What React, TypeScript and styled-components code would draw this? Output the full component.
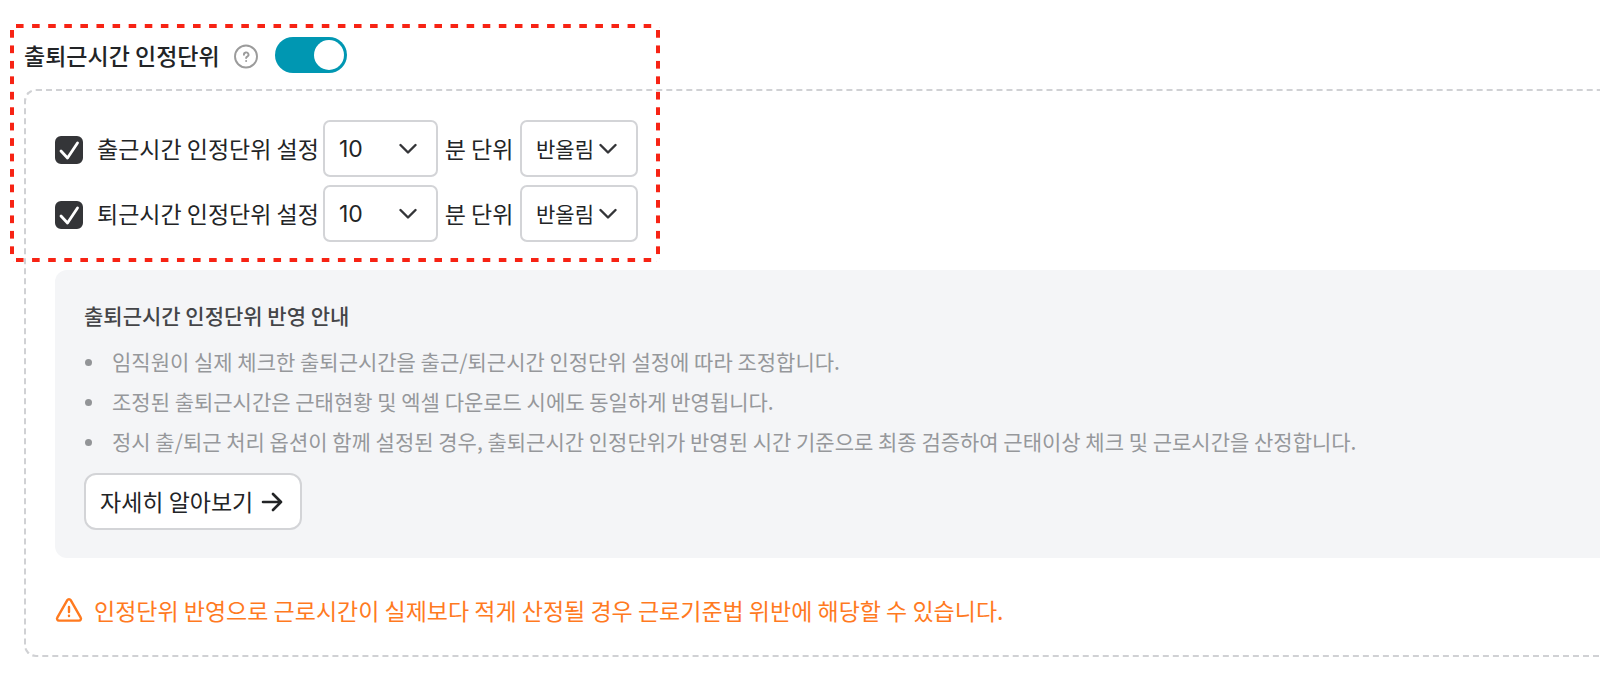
import React, { useId, useState } from "react";
import styled, { createGlobalStyle } from "styled-components";

const GlobalStyle = createGlobalStyle`
  *, *::before, *::after { box-sizing: border-box; }
  body {
    margin: 0;
    background: #fff;
    color: #222426;
    font-family: "Noto Sans CJK KR", "Noto Sans", sans-serif;
    font-size: 23px;
    line-height: 36px;
    overflow-x: hidden;
  }
  button, input, select { font: inherit; color: inherit; margin: 0; }
`;

const Page = styled.main`
  position: relative;
  padding: 37px 0 27px 24px;
`;

const dash = (angle: string) =>
  `linear-gradient(${angle}, #f72314 50%, transparent 50%)`;

const Highlight = styled.div`
  position: absolute;
  top: 24px;
  left: 10px;
  width: 650px;
  height: 238px;
  padding: 6px 0 0 6px;
  border-radius: 6px;
  pointer-events: none;
  background-image: ${dash("90deg")}, ${dash("90deg")}, ${dash("180deg")}, ${dash("180deg")};
  background-origin: content-box;
  background-clip: border-box;
  background-size: 16px 4px, 16px 4px, 4px 15px, 4px 15px;
  background-position: 0 -6px, 0 100%, -6px 0, 100% 0;
  background-repeat: round no-repeat, round no-repeat, no-repeat round, no-repeat round;
`;

const Header = styled.header`
  display: flex;
  align-items: center;
  height: 36px;
  margin-bottom: 16px;
`;

const Title = styled.h1`
  margin: 0;
  font-size: 23px;
  font-weight: 500;
  line-height: 36px;
`;

const HelpButton = styled.button`
  display: flex;
  margin: 2px 16px 0 13px;
  padding: 0;
  border: 0;
  background: none;
  color: #9b9b9b;
`;

const Switch = styled.input`
  appearance: none;
  display: flex;
  justify-content: flex-start;
  width: 72px;
  height: 36px;
  padding: 3px;
  border-radius: 18px;
  background: #c4c7ca;
  &::before {
    content: "";
    width: 30px;
    height: 30px;
    border-radius: 50%;
    background: #fff;
  }
  &:checked {
    justify-content: flex-end;
    background: #0097b2;
  }
`;

const Panel = styled.section`
  padding: 29px 0 29px 29px;
  border: 2px dashed #d0d1d4;
  border-right: 0;
  border-radius: 12px 0 0 12px;
`;

const Rows = styled.div`
  display: flex;
  flex-direction: column;
  gap: 8px;
  margin-bottom: 28px;
`;

const Row = styled.div`
  display: flex;
  align-items: center;
  height: 57px;
`;

const CheckLabel = styled.label`
  display: flex;
  align-items: center;
  gap: 14px;
  width: 268px;
  white-space: nowrap;
`;

const LabelText = styled.span`
  padding-bottom: 2px;
`;

const Stack = styled.span`
  display: grid;
  align-items: center;
  flex: none;
  & > * { grid-area: 1 / 1; }
  & > svg { pointer-events: none; }
`;

const CheckStack = styled(Stack)`
  margin-top: 2px;
`;

const CheckBox = styled.input`
  appearance: none;
  width: 28px;
  height: 28px;
  border: 2px solid #343538;
  border-radius: 6px;
  &:checked { background: #343538; }
`;

const SelectStack = styled(Stack)`
  & > svg {
    justify-self: end;
    margin-right: 21px;
  }
`;

const Select = styled.select<{ $width: number; $numeric?: boolean }>`
  appearance: none;
  width: ${(p) => p.$width}px;
  height: 57px;
  padding: ${(p) => (p.$numeric ? "0 14px" : "0 14px 2px")};
  border: 2px solid #d3d4d7;
  border-radius: 7px;
  background: #fff;
  font-family: ${(p) => (p.$numeric ? "Inter, " : "")}"Noto Sans CJK KR", sans-serif;
  font-size: ${(p) => (p.$numeric ? 23 : 21)}px;
`;

const Unit = styled.span`
  width: 82px;
  padding-bottom: 2px;
  text-align: center;
`;

const Info = styled.section`
  padding: 29px 29px 28px;
  border-radius: 12px 0 0 12px;
  background: #f4f5f7;
  font-size: 21px;
`;

const InfoTitle = styled.h2`
  margin: 0 0 10px;
  color: #444548;
  font-size: 21px;
  font-weight: 500;
  line-height: 32px;
`;

const InfoList = styled.ul`
  margin: 0 0 12px;
  padding: 0;
  list-style: none;
  color: #96989b;
`;

const InfoItem = styled.li`
  display: flex;
  align-items: center;
  gap: 20px;
  padding-left: 1px;
  line-height: 40px;
  &::before {
    content: "";
    flex: none;
    width: 7px;
    height: 7px;
    margin-top: 2px;
    border-radius: 50%;
    background: #929497;
  }
`;

const MoreButton = styled.button`
  display: flex;
  align-items: center;
  gap: 8px;
  width: 218px;
  height: 57px;
  padding: 0 14px;
  border: 2px solid #d3d4d7;
  border-radius: 12px;
  background: #fff;
  font-size: 23px;
  white-space: nowrap;
`;

const Warning = styled.p`
  display: flex;
  align-items: center;
  gap: 11px;
  margin: 36px 0 0;
  color: #ff7a1f;
  line-height: 32px;
`;

const Chevron = () => (
  <svg width="18" height="12" viewBox="0 0 18 12" fill="none" stroke="#343538" strokeWidth="2.4" strokeLinecap="round" strokeLinejoin="round">
    <path d="M1.500 2l7.500 7.500L16.500 2" />
  </svg>
);

function UnitRow({ label }: { label: string }) {
  const id = useId();
  const [on, setOn] = useState(true);
  return (
    <Row>
      <CheckLabel htmlFor={id}>
        <CheckStack>
          <CheckBox id={id} type="checkbox" checked={on} onChange={(e) => setOn(e.target.checked)} />
          <svg width="28" height="28" viewBox="0 0 28 28" fill="none" stroke="#fff" strokeWidth="2.8" strokeLinecap="round" strokeLinejoin="round">
            <path d="M6 15l6.500 7L22.500 7" />
          </svg>
        </CheckStack>
        <LabelText>{label}</LabelText>
      </CheckLabel>
      <SelectStack>
        <Select $width={115} $numeric aria-label={`${label} 분`} defaultValue="10">
          <option>5</option>
          <option>10</option>
          <option>30</option>
        </Select>
        <Chevron />
      </SelectStack>
      <Unit>분 단위</Unit>
      <SelectStack>
        <Select $width={118} aria-label={`${label} 방식`} defaultValue="반올림">
          <option>반올림</option>
          <option>올림</option>
          <option>내림</option>
        </Select>
        <Chevron />
      </SelectStack>
    </Row>
  );
}

export default function App() {
  const [enabled, setEnabled] = useState(true);
  return (
    <>
      <GlobalStyle />
      <Page>
        <Header>
          <Title id="unit-title">출퇴근시간 인정단위</Title>
          <HelpButton type="button" aria-label="도움말">
            <svg width="26" height="26" viewBox="0 0 26 26" fill="none" stroke="currentColor" strokeLinecap="round" strokeLinejoin="round">
              <circle cx="13" cy="13.500" r="11" strokeWidth="1.900" />
              <path d="M10.900 11.700a2.300 2.200 0 1 1 3.500 1.800c-.9.600-1.300.8-1.300 1.600" strokeWidth="1.900" />
              <path d="M13.100 17.900v.1" strokeWidth="2" />
            </svg>
          </HelpButton>
          <Switch
            type="checkbox"
            role="switch"
            aria-labelledby="unit-title"
            checked={enabled}
            onChange={(e) => setEnabled(e.target.checked)}
          />
        </Header>
        <Panel>
          <Rows>
            <UnitRow label="출근시간 인정단위 설정" />
            <UnitRow label="퇴근시간 인정단위 설정" />
          </Rows>
          <Info>
            <InfoTitle>출퇴근시간 인정단위 반영 안내</InfoTitle>
            <InfoList>
              <InfoItem>임직원이 실제 체크한 출퇴근시간을 출근/퇴근시간 인정단위 설정에 따라 조정합니다.</InfoItem>
              <InfoItem>조정된 출퇴근시간은 근태현황 및 엑셀 다운로드 시에도 동일하게 반영됩니다.</InfoItem>
              <InfoItem>정시 출/퇴근 처리 옵션이 함께 설정된 경우, 출퇴근시간 인정단위가 반영된 시간 기준으로 최종 검증하여 근태이상 체크 및 근로시간을 산정합니다.</InfoItem>
            </InfoList>
            <MoreButton type="button">
              <LabelText>자세히 알아보기</LabelText>
              <svg width="22" height="20" viewBox="0 0 22 20" fill="none" stroke="#222426" strokeWidth="2.600" strokeLinecap="round" strokeLinejoin="round">
                <path d="M2 10h18M12 2l8 8-8 8" />
              </svg>
            </MoreButton>
          </Info>
          <Warning>
            <svg width="28" height="26" viewBox="0 0 28 26" fill="none" stroke="currentColor" strokeWidth="2.400" strokeLinecap="round" strokeLinejoin="round">
              <path d="M12.300 3.200 2.300 20.700a1.900 1.900 0 0 0 1.700 2.900h20a1.900 1.900 0 0 0 1.700-2.900l-10-17.500a1.950 1.950 0 0 0-3.400 0z" />
              <path d="M14 10v5M14 18.600v.4" />
            </svg>
            인정단위 반영으로 근로시간이 실제보다 적게 산정될 경우 근로기준법 위반에 해당할 수 있습니다.
          </Warning>
        </Panel>
        <Highlight />
      </Page>
    </>
  );
}
